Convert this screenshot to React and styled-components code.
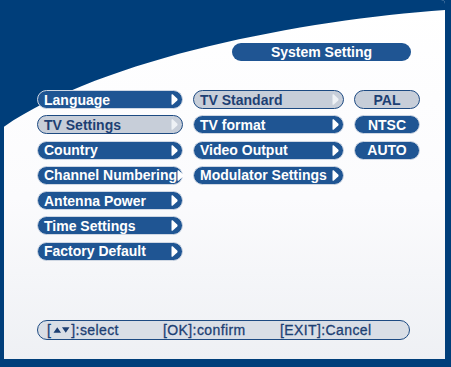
import styled, { createGlobalStyle } from 'styled-components'

const GlobalStyle = createGlobalStyle`
  html, body {
    margin: 0;
    padding: 0;
    background: #003e7a;
  }
  body {
    font-family: "Liberation Sans", Arial, sans-serif;
  }
`

const leftItems = [
  { label: 'Language' },
  { label: 'TV Settings', active: true },
  { label: 'Country' },
  { label: 'Channel Numbering' },
  { label: 'Antenna Power' },
  { label: 'Time Settings' },
  { label: 'Factory Default' },
]

const middleItems = [
  { label: 'TV Standard', active: true },
  { label: 'TV format' },
  { label: 'Video Output' },
  { label: 'Modulator Settings' },
]

const rightItems = [
  { label: 'PAL', active: true },
  { label: 'NTSC' },
  { label: 'AUTO' },
]

function Arrow() {
  return (
    <ArrowIcon viewBox="0 0 7 11" aria-hidden="true">
      <path d="M0.5 0.8 C0.5 0.2 1 0 1.6 0.3 L6.2 4.6 C6.7 5.1 6.7 5.9 6.2 6.4 L1.6 10.7 C1 11 0.5 10.8 0.5 10.2 Z" />
    </ArrowIcon>
  )
}

function UpDown() {
  return (
    <KeysIcon viewBox="0 0 18 8" aria-hidden="true">
      <path d="M0.5 7 L4.5 1 L8.5 7 Z M9.5 1 L17.5 1 L13.5 7 Z" />
    </KeysIcon>
  )
}

export default function App() {
  return (
    <>
      <GlobalStyle />
      <Frame>
        <Panel>
          <Swoosh viewBox="0 0 442 360" preserveAspectRatio="none" aria-hidden="true">
            <path d="M0 0 H442 V10 C300 20 100 58 0 127 Z" fill="#003e7a" />
          </Swoosh>
          <Content>
            <TitleRow>
              <Title>System Setting</Title>
            </TitleRow>
            <Menus>
              <Column>
                {leftItems.map(item => (
                  <Item key={item.label} $active={item.active} $width={146}>
                    <span>{item.label}</span>
                    <Arrow />
                  </Item>
                ))}
              </Column>
              <Column>
                {middleItems.map(item => (
                  <Item key={item.label} $active={item.active} $width={151}>
                    <span>{item.label}</span>
                    <Arrow />
                  </Item>
                ))}
              </Column>
              <Column>
                {rightItems.map(item => (
                  <Option key={item.label} $active={item.active}>{item.label}</Option>
                ))}
              </Column>
            </Menus>
            <Footer>
              <Hint $width={116}>[<UpDown />]:select</Hint>
              <Hint $width={117}>[OK]:confirm</Hint>
              <Hint>[EXIT]:Cancel</Hint>
            </Footer>
          </Content>
        </Panel>
      </Frame>
    </>
  )
}

const Frame = styled.div`
  width: 451px;
  height: 367px;
  box-sizing: border-box;
  padding: 0 6px 8px 4px;
  background: #003e7a;
  overflow: hidden;
`

const Panel = styled.div`
  position: relative;
  height: 100%;
  background: linear-gradient(180deg, #ffffff 0%, #fbfbfd 55%, #eef0f4 100%);
  border-radius: 0 4px 0 0;
  overflow: hidden;
`

const Swoosh = styled.svg`
  position: absolute;
  left: 0;
  top: 0;
  width: 100%;
  height: 100%;
`

const Content = styled.div`
  position: relative;
  display: flex;
  flex-direction: column;
  padding: 43px 0 0 33px;
`

const TitleRow = styled.div`
  display: flex;
  padding-left: 195px;
`

const Title = styled.div`
  width: 179px;
  height: 18px;
  box-sizing: border-box;
  border-radius: 9px;
  background: #1f5593;
  color: #ffffff;
  font-size: 14px;
  font-weight: 700;
  line-height: 18px;
  text-align: center;
`

const Menus = styled.div`
  display: flex;
  gap: 10px;
  margin-top: 29px;
`

const Column = styled.div`
  display: flex;
  flex-direction: column;
  gap: 6.3px;
`

const Item = styled.div`
  width: ${p => p.$width}px;
  height: 19px;
  box-sizing: border-box;
  display: flex;
  align-items: center;
  justify-content: space-between;
  padding: 0 4px 0 6px;
  border-radius: 9.5px;
  border: ${p => (p.$active ? '1.5px solid #1d4a82' : '1px solid #cfd7e3')};
  background: ${p => (p.$active ? '#c7ced9' : '#1f5593')};
  color: ${p => (p.$active ? '#1d3f73' : '#ffffff')};
  font-size: 14px;
  font-weight: 700;
  white-space: nowrap;

  svg {
    fill: ${p => (p.$active ? '#eef1f5' : '#ffffff')};
  }
`

const ArrowIcon = styled.svg`
  width: 7px;
  height: 11px;
  flex: none;
`

const Option = styled.div`
  width: 66px;
  height: 19px;
  box-sizing: border-box;
  display: flex;
  align-items: center;
  justify-content: center;
  border-radius: 9.5px;
  border: ${p => (p.$active ? '1.5px solid #1d4a82' : '1px solid #cfd7e3')};
  background: ${p => (p.$active ? '#c7ced9' : '#1f5593')};
  color: ${p => (p.$active ? '#1d3f73' : '#ffffff')};
  font-size: 14px;
  font-weight: 700;
`

const Footer = styled.div`
  width: 373px;
  height: 20px;
  box-sizing: border-box;
  display: flex;
  align-items: center;
  margin-top: 59px;
  padding-left: 9px;
  border-radius: 10px;
  border: 1.5px solid #1d4a82;
  background: #d9dee6;
  color: #1d3f73;
`

const Hint = styled.span`
  display: inline-flex;
  align-items: center;
  width: ${p => (p.$width ? `${p.$width}px` : 'auto')};
  font-size: 14px;
  letter-spacing: 0.4px;
  white-space: nowrap;
  -webkit-text-stroke: 0.3px #1d3f73;
`

const KeysIcon = styled.svg`
  width: 17px;
  height: 8px;
  margin: 0 1px 0 2px;
  fill: #1d3f73;
`
